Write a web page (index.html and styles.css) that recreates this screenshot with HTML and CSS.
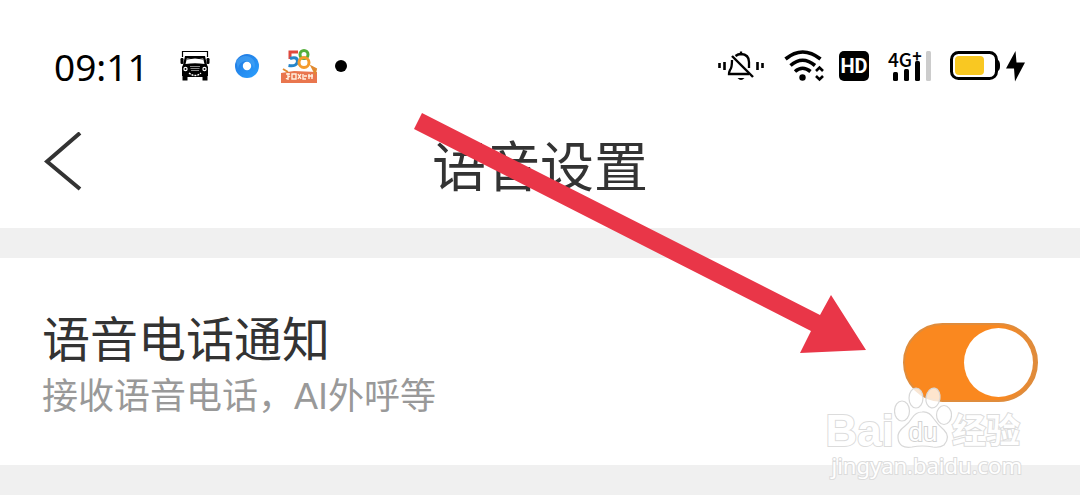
FILE: index.html
```html
<!DOCTYPE html>
<html lang="zh-CN">
<head>
<meta charset="utf-8">
<meta name="viewport" content="width=device-width, initial-scale=1">
<title>语音设置</title>
<link rel="stylesheet" href="styles.css">
</head>
<body>
<div class="screen">
  <div class="status">
    <div class="status-left">
      <time class="clock">09:11</time>
      <svg class="ic-truck" width="30" height="32" viewBox="0 0 30 32" aria-hidden="true">
        <path d="M2.500 7V1.500H27.500V7" fill="none" stroke="#000" stroke-width="1.200"/>
        <path d="M5 6H25L27 15L28 17V26H27.500V30.500H22.500V27H7.500V30.500H2.500V26H2V17L3 15Z"/>
        <rect x="0.500" y="8" width="3" height="6" rx="1.200"/><rect x="26.500" y="8" width="3" height="6" rx="1.200"/>
        <path d="M7 8H23L24.500 14Q15 12.500 5.500 14Z" fill="#fff"/>
        <path d="M7 9Q15 7 23 9" fill="none" stroke="#000"/>
        <circle cx="5.500" cy="19" r="2.200" fill="#fff"/><circle cx="24.500" cy="19" r="2.200" fill="#fff"/>
        <circle cx="5.500" cy="19" r="1"/><circle cx="24.500" cy="19" r="1"/>
        <path d="M10 16.500H20M10.500 18.500H19.500M11 20.500H19" stroke="#888"/>
        <path d="M9 23Q15 28 21 23" fill="none" stroke="#fff" stroke-width="1.300" stroke-dasharray="2 1"/>
      </svg>
      <svg class="ic-ring" width="24" height="24" viewBox="0 0 24 24" aria-hidden="true">
        <defs><linearGradient id="blue" x1="0" y1="0" x2="1" y2="1"><stop offset="0" stop-color="#1f76df"/><stop offset="1" stop-color="#2ba0ff"/></linearGradient></defs>
        <circle cx="12" cy="12" r="12" fill="url(#blue)"/>
        <path d="M1 7Q7 0 15 3Q22 7 19 15Q17 7 10 7Q4 8 3 15Z" fill="#49a7f5" opacity=".6"/>
        <circle cx="12" cy="12" r="4.200" fill="#fff"/>
      </svg>
      <svg class="ic-58" width="38" height="36" viewBox="0 0 38 36" aria-hidden="true">
        <path d="M18 4H10V11" fill="none" stroke="#e1483c" stroke-width="3"/>
        <path d="M10 10.500Q17.500 8 17.500 13.500Q16.500 19 8.500 17.500" fill="none" stroke="#2685c9" stroke-width="3"/>
        <circle cx="24" cy="6.500" r="4" fill="none" stroke="#55af3b" stroke-width="3"/>
        <circle cx="24" cy="14.500" r="5" fill="none" stroke="#f49b2d" stroke-width="3"/>
        <path d="M1 25L14 23L37 24V35H1Z" fill="#e9764e"/>
        <path d="M3 21L8 24M32 19L36 21L35 25Z" stroke="#e08a30" stroke-width="2" fill="#d65437"/>
        <path d="M6 26H10M8 25V32M6 31L10 28M12 26H16V31H12ZM18 26L21 31M21 26L18 31M23 26V31H26M24 28H27M29 26V31M28 28H33M32 26V31" fill="none" stroke="#fff0df" stroke-width="1.400"/>
      </svg>
      <span class="dot"></span>
    </div>
    <div class="status-right">
      <svg width="46" height="32" viewBox="0 0 46 32" fill="none" stroke="#000" stroke-width="2.300" aria-hidden="true">
        <path d="M1.500 13V18M6.500 12V20M39.500 12V20M44.500 13V18" stroke-width="2.600"/>
        <path d="M17.500 6Q20 4 23 4Q31 4.500 31 12V18M14 10Q14 18 12 20Q11 22 11 24H31"/>
        <path d="M14 6L35 27" stroke-width="2.400"/><path d="M23 1.500V4"/>
        <path d="M19.500 28H26.500Q23 32 19.500 28Z" fill="#000" stroke="none"/>
      </svg>
      <svg class="ic-wifi" width="40" height="32" viewBox="0 0 40 32" fill="none" stroke="#000" stroke-width="3.600" aria-hidden="true">
        <path d="M1.500 9Q18.500 -5 36.500 9M6.500 15.500Q18.500 5 31 15.500M11 21.500Q18.500 15 26.500 21.500"/>
        <circle cx="18.500" cy="27.500" r="3.200" fill="#000" stroke="none"/>
        <path d="M32 21L35.500 17.500L39 21M32 26L35.500 29.500L39 26" stroke-width="2.600"/>
      </svg>
      <span class="hd">HD</span>
      <span class="signal">
        <span class="net">4G<sup>+</sup></span>
        <svg width="44" height="32" viewBox="0 0 44 32" aria-hidden="true">
          <rect x="6" y="22" width="5" height="9" rx="1.500"/><rect x="17" y="19" width="5" height="12" rx="1.500"/><rect x="28" y="11" width="5" height="20" rx="1.500"/><rect x="39" y="1" width="5" height="30" rx="1.500" fill="#ccc"/>
        </svg>
      </span>
      <svg class="ic-battery" width="76" height="32" viewBox="0 0 76 32" aria-hidden="true">
        <rect x="1.500" y="2.500" width="45" height="26" rx="7" fill="#fff" stroke="#000" stroke-width="3"/>
        <path d="M48 10Q50 11 50 15.500Q50 20 48 21Z"/>
        <rect x="5" y="6" width="29" height="19" rx="4" fill="#f9c822"/>
        <path d="M65.500 1L56 18.500H64L65 31.500L75 12.500H66.500Z"/>
      </svg>
    </div>
  </div>
  <header class="header">
    <button class="back" type="button" aria-label="返回">
      <svg width="38" height="60" viewBox="0 0 38 60" fill="none" stroke="#333" stroke-width="4" aria-hidden="true"><path d="M36 1L3 29.500L36 57"/></svg>
    </button>
    <h1 class="title">语音设置</h1>
  </header>
  <main class="settings">
    <div class="row">
      <label class="texts" for="voice"><span class="label">语音电话通知</span><span class="hint">接收语音电话，AI外呼等</span></label>
      <input class="switch" id="voice" type="checkbox" role="switch" checked>
    </div>
  </main>
  <svg class="arrow" width="454" height="242" viewBox="0 0 454 242" aria-hidden="true">
    <path d="M10 1L408 203L419 183L454 238L388 241L399 219L2 17Z" fill="#e93648"/>
  </svg>
  <div class="watermark">
    <div class="brand">
      <span class="bai">Bai</span>
      <svg class="paw" width="58" height="62" viewBox="0 0 58 62" aria-hidden="true">
        <g fill="#fff" fill-opacity=".78" stroke="#d8d8d8" stroke-width="1.200">
          <ellipse cx="8" cy="24" rx="7.500" ry="10"/><ellipse cx="22" cy="11" rx="7" ry="10"/>
          <ellipse cx="39" cy="11" rx="7" ry="10" transform="rotate(10 39 11)"/><ellipse cx="50" cy="28" rx="7.500" ry="9.500"/>
          <path d="M28 25Q35 24 40 32Q44 38 50 43Q57 50 50 58Q46 61 39 60Q28 58 18 60Q5 62 4 51Q3 45 11 39Q15 36 18 31Q22 25 28 25Z"/>
        </g>
        <text class="du" x="29" y="54" text-anchor="middle">du</text>
      </svg>
      <span class="jy">经验</span>
    </div>
    <span class="domain">jingyan.baidu.com</span>
  </div>
</div>
</body>
</html>
```
FILE: styles.css
```css
* { box-sizing: border-box; }
body {
  margin: 0;
  background: #fff;
  color: #333;
  font-family: "Noto Sans CJK SC", sans-serif;
}
.screen { position: relative; overflow: hidden; }
.status {
  display: flex;
  justify-content: space-between;
  align-items: center;
  padding: 44px 54px 0 54px;
  color: #000;
}
.status-left, .status-right { display: flex; align-items: center; height: 44px; }
.clock { font: 37px/44px "Noto Sans", sans-serif; padding-top: 2px; }
.ic-truck { margin-left: 31px; }
.ic-ring { margin-left: 25px; }
.ic-58 { margin-left: 21px; }
.dot { width: 12px; height: 12px; margin-left: 17px; border-radius: 50%; background: #000; }
.ic-wifi { margin-left: 20px; }
.hd {
  width: 30px;
  margin-left: 15px;
  border-radius: 5px;
  background: #000;
  color: #fff;
  font: bold 20px/30px Roboto, sans-serif;
  text-align: center;
}
.signal { position: relative; display: flex; margin-left: 18px; }
.net { position: absolute; left: 1px; top: 0; font: 500 19px/18px "Noto Sans CJK SC", sans-serif; white-space: nowrap; }
.net sup { font-size: 16px; line-height: 8px; font-weight: bold; vertical-align: 5px; }
.ic-battery { margin-left: 19px; }
.header {
  display: grid;
  grid-template-columns: 40px 1fr 40px;
  align-items: center;
  height: 140px;
  padding: 0 44px;
}
.back { display: flex; padding: 0; border: 0; background: none; align-self: start; margin-top: 44px; }
.title { margin: 12px 0 0; font-size: 54px; line-height: 64px; font-weight: 400; text-align: center; }
.settings { border-top: 30px solid #f0f0f0; border-bottom: 30px solid #f0f0f0; }
.row { display: flex; justify-content: space-between; align-items: center; padding: 48px 42px 44px; }
.texts { display: flex; flex-direction: column; gap: 6px; }
.label { font-size: 48px; line-height: 60px; }
.hint { color: #999; font: 36px/49px "Liberation Sans", "Noto Sans CJK SC", sans-serif; }
.switch {
  display: flex;
  align-items: center;
  justify-content: flex-end;
  appearance: none;
  width: 135px;
  height: 79px;
  margin: 0 0 2px;
  padding: 0 3px;
  border: 2px solid #df8c3c;
  border-radius: 40px;
  background: linear-gradient(90deg, #fa881f 70%, #e08b3b);
}
.switch::before { content: ""; width: 69px; height: 69px; border-radius: 50%; background: #fff; }
.switch:not(:checked) { justify-content: flex-start; border-color: #ccc; background: #ccc; }
.arrow { position: absolute; left: 412px; top: 112px; }
.watermark { position: absolute; right: 58px; top: 387px; pointer-events: none; }
.brand { display: flex; align-items: flex-end; justify-content: flex-end; height: 62px; }
.bai, .jy, .domain { -webkit-text-stroke: 2px #dcdcdc; paint-order: stroke fill; color: #fff; }
.bai { font: bold 44px/56px "Liberation Sans", sans-serif; height: 46px; }
.du { font: 26px "Liberation Sans", sans-serif; fill: #fff; stroke: #d2d2d2; stroke-width: 2px; paint-order: stroke fill; }
.jy { margin-right: 2px; font: bold 34px/44px "Noto Sans CJK SC", sans-serif; height: 42px; }
.domain { display: block; font: 22px/32px "Noto Sans", sans-serif; text-align: right; }
```
